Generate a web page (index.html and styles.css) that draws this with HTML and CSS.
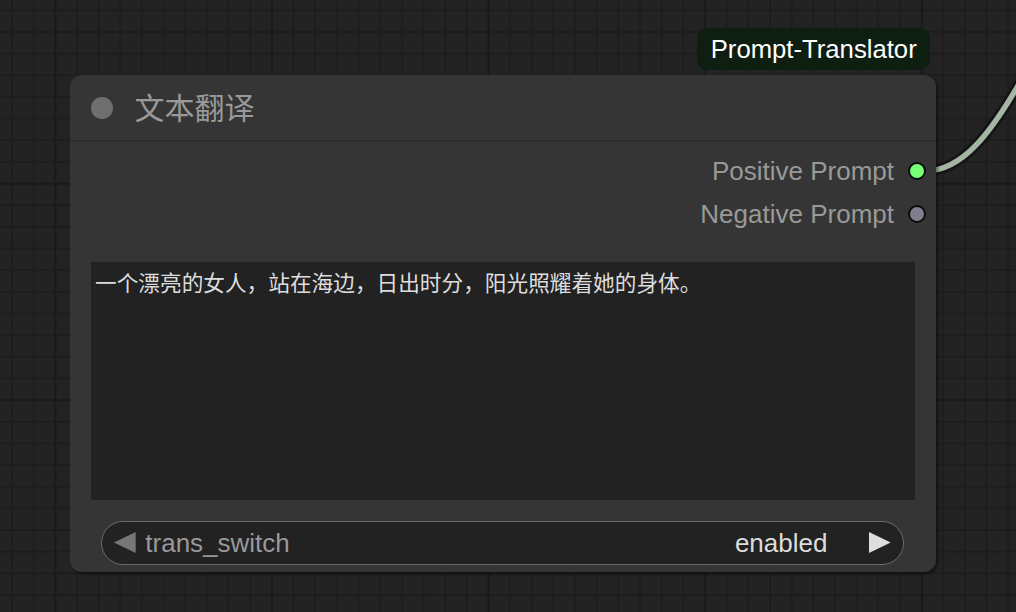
FILE: index.html
```html
<!DOCTYPE html>
<html lang="zh">
<head>
<meta charset="utf-8">
<title>文本翻译</title>
<link rel="stylesheet" href="styles.css">
</head>
<body>
<div class="canvas">
  <svg class="wire" width="1016" height="612" viewBox="0 0 1016 612">
    <path class="wire-outline" d="M925 171 C960 171, 990 140, 1035 55"/>
    <path class="wire-core" d="M925 171 C960 171, 990 140, 1035 55"/>
  </svg>

  <div class="badge">Prompt-Translator</div>

  <div class="node">
    <div class="node-title">
      <span class="title-dot"></span>
      <span class="title-text">文本翻译</span>
    </div>
    <div class="node-body">
      <div class="outputs">
        <div class="slot">
          <span class="slot-label">Positive Prompt</span>
          <span class="slot-dot connected"></span>
        </div>
        <div class="slot">
          <span class="slot-label">Negative Prompt</span>
          <span class="slot-dot"></span>
        </div>
      </div>
      <div class="textarea">一个漂亮的女人，站在海边，日出时分，阳光照耀着她的身体。</div>
      <div class="combo">
        <svg class="arrow" width="22" height="22" viewBox="0 0 22 22"><polygon class="arrow-left" points="0,10.5 21.7,0 21.7,21"/></svg>
        <span class="combo-label">trans_switch</span>
        <span class="combo-value">enabled</span>
        <svg class="arrow" width="22" height="22" viewBox="0 0 22 22"><polygon class="arrow-right" points="0,0 0,21 21.7,10.5"/></svg>
      </div>
    </div>
  </div>
</div>
</body>
</html>
```
FILE: styles.css
```css
html, body {
  margin: 0;
  padding: 0;
  background: #232323;
}

.canvas {
  position: relative;
  width: 1016px;
  height: 612px;
  overflow: hidden;
  background-color: #232323;
  background-image:
    linear-gradient(to right, #1a1a1a 2.4px, transparent 2.4px),
    linear-gradient(to bottom, #1a1a1a 2.4px, transparent 2.4px),
    linear-gradient(to right, #1d1d1d 1.6px, transparent 1.6px),
    linear-gradient(to bottom, #1d1d1d 1.6px, transparent 1.6px);
  background-size:
    216.667px 100%,
    100% 216.667px,
    21.6667px 100%,
    100% 21.6667px;
  background-position:
    54.3px 0,
    0 399.3px,
    11px 0,
    0 9.3px;
  font-family: "Liberation Sans", Arial, sans-serif;
}

.wire {
  position: absolute;
  left: 0;
  top: 0;
}

.wire-outline {
  fill: none;
  stroke: #151515;
  stroke-width: 11;
}

.wire-core {
  fill: none;
  stroke: #a2b6a2;
  stroke-width: 5.5;
}

.badge {
  position: absolute;
  left: 697px;
  top: 28px;
  height: 42px;
  padding: 0 13.7px;
  display: flex;
  align-items: center;
  background: #0e1e11;
  border-radius: 10px;
  color: #ffffff;
  font-size: 25.7px;
  white-space: nowrap;
}

.node {
  position: absolute;
  left: 70px;
  top: 75px;
  width: 866px;
  height: 497px;
  background: #353535;
  border-radius: 12px;
  box-shadow: 2px 2px 3px rgba(0, 0, 0, 0.45);
  display: flex;
  flex-direction: column;
}

.node-title {
  height: 65px;
  border-bottom: 2px solid #2d2d2d;
  display: flex;
  align-items: center;
  padding-left: 21px;
}

.title-dot {
  width: 21.5px;
  height: 21.5px;
  border-radius: 50%;
  background: #6f6f6f;
  flex: none;
  margin-top: 1px;
}

.title-text {
  margin-left: 22px;
  margin-bottom: 3px;
  color: #999999;
  font-family: "Noto Sans CJK SC", "Noto Sans", sans-serif;
  font-size: 30px;
  line-height: 1;
}

.node-body {
  flex: 1;
  display: flex;
  flex-direction: column;
  padding: 7.75px 0 0;
}

.outputs {
  display: flex;
  flex-direction: column;
}

.slot {
  height: 42.5px;
  display: flex;
  align-items: center;
  justify-content: flex-end;
  padding-right: 10.5px;
}

.slot-label {
  color: #999999;
  font-size: 26px;
  line-height: 1;
}

.slot-dot {
  width: 14px;
  height: 14px;
  margin-left: 13.5px;
  border-radius: 50%;
  border: 2px solid #0c0c0c;
  background: #7e7e8e;
  flex: none;
}

.slot-dot.connected {
  background: #77ff77;
}

.textarea {
  margin: 27.5px 21px 0 21px;
  height: 238px;
  box-sizing: border-box;
  padding: 4px 4px;
  background: #222222;
  color: #dddddd;
  font-family: "Noto Sans CJK SC", "Noto Sans", sans-serif;
  font-size: 21.67px;
  line-height: normal;
}

.combo {
  margin: 21px 31.7px 0 31px;
  height: 44px;
  box-sizing: border-box;
  border: 1.7px solid #6a6a6a;
  border-radius: 22px;
  background: #222222;
  display: flex;
  align-items: center;
  padding: 0 12.3px;
}

.arrow {
  flex: none;
  display: block;
}

.arrow-left {
  fill: #777777;
}

.arrow-right {
  fill: #dddddd;
}

.combo-label {
  margin-left: 9px;
  color: #999999;
  font-size: 26px;
  line-height: 1;
  flex: 1;
}

.combo-value {
  margin-right: 41.6px;
  color: #dddddd;
  font-size: 26px;
  line-height: 1;
}
```
